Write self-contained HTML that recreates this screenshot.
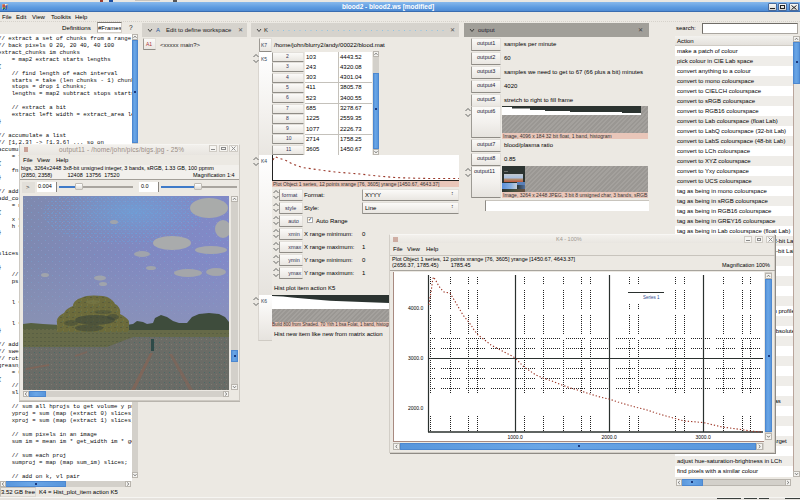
<!DOCTYPE html>
<html><head><meta charset="utf-8">
<style>
*{margin:0;padding:0;box-sizing:border-box}
html,body{width:800px;height:500px;overflow:hidden;background:#ece9e3;font-family:"Liberation Sans",sans-serif;font-size:6px;color:#222}
.a{position:absolute}
.tx{position:absolute;white-space:pre;line-height:1}
.btn{position:absolute;background:linear-gradient(#fbfaf8,#e9e6e1);border:1px solid #e2dfda;border-left-color:#9d9a94;border-bottom-color:#8f8c86;border-radius:1px}
.hatch{position:absolute;background:repeating-linear-gradient(135deg,#a4a19d 0 1.6px,#9a9793 1.6px 3.2px)}
.pink{position:absolute;background:#e9c6b9;color:#333;font-size:5px;white-space:pre;line-height:6px;overflow:hidden}
.code{position:absolute;font-family:"Liberation Mono",monospace;font-size:5.7px;line-height:6.95px;white-space:pre;color:#0a0a0a}
.sbv{position:absolute;background:#d3d0ca}
.thumbb{position:absolute;background:linear-gradient(90deg,#5896dc,#6aa6e6 40%,#5896dc);border:1px solid #4d88d0}
</style></head><body>

<!-- top panel strip -->
<div class="a" style="left:0;top:0;width:800px;height:2px;background:#e9e7e2"></div>
<div class="a" style="left:100px;top:0;width:3px;height:2px;background:#a04030"></div>
<div class="a" style="left:109px;top:0;width:4px;height:2px;background:#2050a0"></div>
<div class="a" style="left:135px;top:0;width:25px;height:1px;background:#c8c4bd"></div>
<div class="a" style="left:173px;top:0;width:4px;height:2px;background:#555"></div>
<!-- title bar -->
<div class="a" style="left:0;top:2px;width:800px;height:10px;background:linear-gradient(#86b8ec,#5d9be0 60%,#4f8bd4);border-bottom:1px solid #3a6db0"></div>
<svg class="a" style="left:2px;top:4px" width="6" height="6"><rect x="0" y="0" width="6" height="5" fill="#c8b8a0"/><rect x="0.5" y="0.5" width="3" height="3" fill="#c85040"/><rect x="3.5" y="1" width="2" height="4" fill="#3060c0"/><rect x="1" y="3.5" width="2" height="1.5" fill="#308040"/><rect x="3" y="0" width="1.5" height="1.5" fill="#f0f0e8"/><rect x="1" y="5" width="1" height="1" fill="#2050a0"/><rect x="3.5" y="5" width="1" height="1" fill="#2050a0"/></svg>
<div class="tx" style="left:342px;top:4px;font-size:6.5px;font-weight:bold;color:#fff">blood2 - blood2.ws [modified]</div>
<div class="a" style="left:768px;top:3px;width:9px;height:8px;background:linear-gradient(#f8f8f6,#d8d6d2);border:1px solid #4a6a9a;border-radius:1px"></div>
<div class="a" style="left:770px;top:8px;width:5px;height:1px;background:#222"></div>
<div class="a" style="left:778px;top:3px;width:9px;height:8px;background:linear-gradient(#f8f8f6,#d8d6d2);border:1px solid #4a6a9a;border-radius:1px"></div>
<div class="a" style="left:780px;top:5px;width:5px;height:4px;border:1px solid #222;border-top-width:1.5px"></div>
<div class="a" style="left:789px;top:3px;width:10px;height:8px;background:linear-gradient(#f8f8f6,#d8d6d2);border:1px solid #4a6a9a;border-radius:1px"></div>
<svg class="a" style="left:791px;top:4.5px" width="6" height="5"><path d="M0.5,0.5 L5.5,4.5 M5.5,0.5 L0.5,4.5" stroke="#222" stroke-width="1"/></svg>

<!-- menu -->
<div class="tx" style="left:2px;top:14px;font-size:6px;color:#000">File</div>
<div class="tx" style="left:16px;top:14px;font-size:6px;color:#000">Edit</div>
<div class="tx" style="left:32px;top:14px;font-size:6px;color:#000">View</div>
<div class="tx" style="left:51px;top:14px;font-size:6px;color:#000">Toolkits</div>
<div class="tx" style="left:75px;top:14px;font-size:6px;color:#000">Help</div>
<div class="a" style="left:0;top:21px;width:800px;height:1px;border-top:1px dotted #d6d2cb"></div>

<!-- toolbar -->
<div class="tx" style="left:62px;top:25px;font-size:6.2px;color:#000">Definitions</div>
<div class="a" style="left:97px;top:22px;width:25px;height:11px;background:#fff;border:1px solid #d2cdc6;border-top-color:#7a7670;border-left-color:#b0aca5"></div>
<div class="tx" style="left:98px;top:25px;font-size:6px;color:#000;width:23px;overflow:hidden">#Frames</div>
<div class="tx" style="left:129px;top:25px;font-size:6.5px">?</div>

<!-- code editor -->
<div class="a" style="left:0;top:34px;width:132px;height:447px;background:#fff;overflow:hidden">
<div class="code" style="left:-2px;top:1.8px">// extract a set of chunks from a range
// back pixels 0 20, 20 40, 40 100
extract_chunks im chunks
    = map2 extract starts lengths
{
    // find length of each interval
    starts = take (len chunks - 1) chunks
    stops = drop 1 chunks;
    lengths = map2 subtract stops starts

    // extract a bit
    extract left width = extract_area left 0 width
}

// accumulate a list
// [1,2,3] -&gt; [1,3,6] ... so on
accumulate l
    = foldl fn [] l
{
    fn a b = a ++ [b]
}

// add up columns
add_columns im
    = map (fn im) [0 .. im.bands - 1]
{
    x = im ? 0
    h = 0
}


slices = map extract_slice [0 .. n]

}
    // the number of slices
    ps = len slices


    l = 100


    l = fn
}

// add profile
// sweep each slice
// rotate each
greasn_slices
    = 0
{
    // sum
    sl = 0

    // sum all hprojs to get volume y proj
    yproj = sum (map (extract 0) slices)
    xproj = sum (map (extract 1) slices)

    // sum pixels in an image
    sum im = mean im * get_width im * get_height im

    // sum each proj
    sumproj = map (map sum_im) slices;

    // add on k, vl pair</div>
</div>
<!-- code v scrollbar -->
<div class="sbv" style="left:132px;top:34px;width:6px;height:444px"></div>
<div class="a" style="left:132px;top:34px;width:6px;height:6px;background:#f4f3f0;border:1px solid #b9b5ae"></div>
<div class="thumbb" style="left:132px;top:40px;width:6px;height:103px"></div>
<div class="a" style="left:132px;top:472px;width:6px;height:6px;background:#f4f3f0;border:1px solid #b9b5ae"></div>
<!-- code h scrollbar -->
<div class="sbv" style="left:0;top:481px;width:131px;height:6px"></div>
<div class="thumbb" style="left:5px;top:481px;width:61px;height:6px"></div>
<div class="a" style="left:125px;top:481px;width:6px;height:6px;background:#f4f3f0;border:1px solid #b9b5ae"></div>


<!-- ===== workspace tabs ===== -->
<div class="a" style="left:142px;top:23px;width:105px;height:14px;background:#d6d3cd"></div>
<svg class="a" style="left:147px;top:28px" width="6" height="5"><polyline points="1,1 3,3.5 5,1" fill="none" stroke="#333" stroke-width="0.9"/></svg>
<div class="tx" style="left:156px;top:27px;font-size:6px;color:#2a5aa0">A</div>
<div class="tx" style="left:166px;top:27px;font-size:6px">Edit to define workspace</div>
<div class="tx" style="left:238px;top:27px;font-size:6px;color:#555">&#10005;</div>

<div class="btn" style="left:143px;top:38px;width:13px;height:12px"></div>
<div class="tx" style="left:146px;top:42px;font-size:5px;color:#a33">A1</div>
<div class="tx" style="left:160px;top:42px;font-size:6px">&lt;xxxxx main?&gt;</div>

<div class="a" style="left:251px;top:23px;width:208px;height:14px;background:#d6d3cd"></div>
<svg class="a" style="left:256px;top:28px" width="6" height="5"><polyline points="1,1 3,3.5 5,1" fill="none" stroke="#333" stroke-width="0.9"/></svg>
<div class="tx" style="left:264px;top:27px;font-size:6px">K</div>
<svg class="a" style="left:272px;top:30px" width="175" height="2"><line x1="0" y1="0.5" x2="175" y2="0.5" stroke="#8ec4e4" stroke-width="1" stroke-dasharray="1 4.5"/></svg>
<div class="tx" style="left:450px;top:27px;font-size:6px;color:#555">&#10005;</div>

<div class="a" style="left:464px;top:23px;width:185px;height:14px;background:#a19f99"></div>
<svg class="a" style="left:469px;top:28px" width="6" height="5"><polyline points="1,1 3,3.5 5,1" fill="none" stroke="#333" stroke-width="0.9"/></svg>
<div class="tx" style="left:478px;top:27px;font-size:6px;color:#223">output</div>
<div class="tx" style="left:638px;top:27px;font-size:6px;color:#444">&#10005;</div>


<!-- ===== K column ===== -->
<div class="btn" style="left:259px;top:38px;width:13px;height:14px"></div>
<div class="tx" style="left:261px;top:43px;font-size:5px;color:#345">K7</div>
<div class="tx" style="left:274px;top:42px;font-size:6px;color:#000">/home/john/blurry2/andy/00022/blood.mat</div>
<div class="a" style="left:258px;top:52px;width:14px;height:103px;background:linear-gradient(#fff,#f3f1ee 60%,#e9e6e1);border-left:1px solid #d9d5cf"></div>
<div class="tx" style="left:261px;top:57px;font-size:5px;color:#345">K5</div>
<svg class="a" style="left:253px;top:53.0px" width="6" height="11"><polyline points="0.5,4 3,1.5 5.5,4" fill="none" stroke="#444" stroke-width="0.8"/><polyline points="0.5,7 3,9.5 5.5,7" fill="none" stroke="#444" stroke-width="0.8"/></svg>
<div class="a" style="left:305px;top:52px;width:67px;height:103px;background:#fff"></div>
<div class="a" style="left:338px;top:52px;width:1px;height:103px;background:#c4c1bb"></div>
<div class="a" style="left:305px;top:82px;width:67px;height:1px;background:#c4c1bb"></div>
<div class="a" style="left:305px;top:103px;width:67px;height:1px;background:#c4c1bb"></div>
<div class="a" style="left:305px;top:134px;width:67px;height:1px;background:#c4c1bb"></div>
<div class="sbv" style="left:373px;top:52px;width:6px;height:103px"></div>
<div class="a" style="left:373px;top:51px;width:6px;height:6px;background:#f4f3f0;border:1px solid #b9b5ae"></div>
<div class="thumbb" style="left:373px;top:73px;width:6px;height:76px"></div>
<div class="a" style="left:373px;top:149px;width:6px;height:6px;background:#f4f3f0;border:1px solid #b9b5ae"></div>

<div class="btn" style="left:272px;top:52.0px;width:32px;height:10px"></div>
<div class="tx" style="left:286px;top:54px;font-size:5px;color:#335">2</div>
<div class="tx" style="left:306px;top:53.5px;font-size:6px;color:#000">103</div>
<div class="tx" style="left:340px;top:53.5px;font-size:6px;color:#000">4443.52</div>
<div class="btn" style="left:272px;top:62.3px;width:32px;height:10px"></div>
<div class="tx" style="left:286px;top:64.3px;font-size:5px;color:#335">3</div>
<div class="tx" style="left:306px;top:63.8px;font-size:6px;color:#000">243</div>
<div class="tx" style="left:340px;top:63.8px;font-size:6px;color:#000">4320.08</div>
<div class="btn" style="left:272px;top:72.6px;width:32px;height:10px"></div>
<div class="tx" style="left:286px;top:74.6px;font-size:5px;color:#335">4</div>
<div class="tx" style="left:306px;top:74.1px;font-size:6px;color:#000">303</div>
<div class="tx" style="left:340px;top:74.1px;font-size:6px;color:#000">4301.04</div>
<div class="btn" style="left:272px;top:82.9px;width:32px;height:10px"></div>
<div class="tx" style="left:286px;top:84.9px;font-size:5px;color:#335">5</div>
<div class="tx" style="left:306px;top:84.4px;font-size:6px;color:#000">411</div>
<div class="tx" style="left:340px;top:84.4px;font-size:6px;color:#000">3805.78</div>
<div class="btn" style="left:272px;top:93.2px;width:32px;height:10px"></div>
<div class="tx" style="left:286px;top:95.2px;font-size:5px;color:#335">6</div>
<div class="tx" style="left:306px;top:94.7px;font-size:6px;color:#000">523</div>
<div class="tx" style="left:340px;top:94.7px;font-size:6px;color:#000">3400.55</div>
<div class="btn" style="left:272px;top:103.5px;width:32px;height:10px"></div>
<div class="tx" style="left:286px;top:105.5px;font-size:5px;color:#335">7</div>
<div class="tx" style="left:306px;top:105px;font-size:6px;color:#000">685</div>
<div class="tx" style="left:340px;top:105px;font-size:6px;color:#000">3278.67</div>
<div class="btn" style="left:272px;top:113.8px;width:32px;height:10px"></div>
<div class="tx" style="left:286px;top:115.8px;font-size:5px;color:#335">8</div>
<div class="tx" style="left:306px;top:115.3px;font-size:6px;color:#000">1225</div>
<div class="tx" style="left:340px;top:115.3px;font-size:6px;color:#000">2559.35</div>
<div class="btn" style="left:272px;top:124.1px;width:32px;height:10px"></div>
<div class="tx" style="left:286px;top:126.1px;font-size:5px;color:#335">9</div>
<div class="tx" style="left:306px;top:125.6px;font-size:6px;color:#000">1077</div>
<div class="tx" style="left:340px;top:125.6px;font-size:6px;color:#000">2226.73</div>
<div class="btn" style="left:272px;top:134.4px;width:32px;height:10px"></div>
<div class="tx" style="left:286px;top:136.4px;font-size:5px;color:#335">10</div>
<div class="tx" style="left:306px;top:135.9px;font-size:6px;color:#000">2714</div>
<div class="tx" style="left:340px;top:135.9px;font-size:6px;color:#000">1758.25</div>
<div class="btn" style="left:272px;top:144.7px;width:32px;height:10px"></div>
<div class="tx" style="left:286px;top:146.7px;font-size:5px;color:#335">11</div>
<div class="tx" style="left:306px;top:146.2px;font-size:6px;color:#000">3605</div>
<div class="tx" style="left:340px;top:146.2px;font-size:6px;color:#000">1450.67</div>

<!-- K4 plot row -->
<div class="a" style="left:258px;top:155px;width:14px;height:140px;background:linear-gradient(#fff,#f3f1ee 50%,#e6e3de);border-left:1px solid #d9d5cf"></div>
<div class="tx" style="left:261px;top:159px;font-size:5px;color:#345">K4</div>
<svg class="a" style="left:253px;top:156.0px" width="6" height="11"><polyline points="0.5,4 3,1.5 5.5,4" fill="none" stroke="#444" stroke-width="0.8"/><polyline points="0.5,7 3,9.5 5.5,7" fill="none" stroke="#444" stroke-width="0.8"/></svg>
<div class="a" style="left:272px;top:155px;width:187px;height:26px;background:#fff;border-left:1px solid #222;border-bottom:1px solid #222"></div>
<svg class="a" style="left:272px;top:155px" width="187" height="26"><polyline points="1,5 3,1.5 6,3 13,5 20.5,9 30.5,12.5 48,15 63,17 88,19 105.5,21 123,22.5 135,23 158,23.5 187,23.5" fill="none" stroke="#9b3a2c" stroke-width="1.1" stroke-dasharray="2,3"/></svg>
<div class="pink" style="left:272px;top:181px;width:187px;height:6px;padding-left:1px">Plot Object 1 series, 12 points xrange [76, 3605] yrange [1450.67, 4643.37]</div>

<svg class="a" style="left:273px;top:189.0px" width="6" height="11"><polyline points="0.5,4 3,1.5 5.5,4" fill="none" stroke="#444" stroke-width="0.8"/><polyline points="0.5,7 3,9.5 5.5,7" fill="none" stroke="#444" stroke-width="0.8"/></svg>
<div class="btn" style="left:279px;top:189px;width:24px;height:12px"></div>
<div class="tx" style="left:281.8px;top:192.5px;font-size:5.5px;color:#335">format</div>
<div class="tx" style="left:304px;top:192px;font-size:6px;color:#000">Format:</div>
<svg class="a" style="left:273px;top:202.0px" width="6" height="11"><polyline points="0.5,4 3,1.5 5.5,4" fill="none" stroke="#444" stroke-width="0.8"/><polyline points="0.5,7 3,9.5 5.5,7" fill="none" stroke="#444" stroke-width="0.8"/></svg>
<div class="btn" style="left:279px;top:202px;width:24px;height:12px"></div>
<div class="tx" style="left:285.0px;top:205.5px;font-size:5.5px;color:#335">style</div>
<div class="tx" style="left:304px;top:205px;font-size:6px;color:#000">Style:</div>
<svg class="a" style="left:273px;top:215.0px" width="6" height="11"><polyline points="0.5,4 3,1.5 5.5,4" fill="none" stroke="#444" stroke-width="0.8"/><polyline points="0.5,7 3,9.5 5.5,7" fill="none" stroke="#444" stroke-width="0.8"/></svg>
<div class="btn" style="left:279px;top:215px;width:24px;height:12px"></div>
<div class="tx" style="left:288.2px;top:218.5px;font-size:5.5px;color:#335">auto</div>
<svg class="a" style="left:273px;top:228.0px" width="6" height="11"><polyline points="0.5,4 3,1.5 5.5,4" fill="none" stroke="#444" stroke-width="0.8"/><polyline points="0.5,7 3,9.5 5.5,7" fill="none" stroke="#444" stroke-width="0.8"/></svg>
<div class="btn" style="left:279px;top:228px;width:24px;height:12px"></div>
<div class="tx" style="left:288.2px;top:231.5px;font-size:5.5px;color:#335">xmin</div>
<div class="tx" style="left:304px;top:231px;font-size:6px;color:#000">X range minimum:</div>
<div class="tx" style="left:362px;top:231px;font-size:6px;color:#000">0</div>
<svg class="a" style="left:273px;top:241.0px" width="6" height="11"><polyline points="0.5,4 3,1.5 5.5,4" fill="none" stroke="#444" stroke-width="0.8"/><polyline points="0.5,7 3,9.5 5.5,7" fill="none" stroke="#444" stroke-width="0.8"/></svg>
<div class="btn" style="left:279px;top:241px;width:24px;height:12px"></div>
<div class="tx" style="left:288.2px;top:244.5px;font-size:5.5px;color:#335">xmax</div>
<div class="tx" style="left:304px;top:244px;font-size:6px;color:#000">X range maximum:</div>
<div class="tx" style="left:362px;top:244px;font-size:6px;color:#000">1</div>
<svg class="a" style="left:273px;top:254.0px" width="6" height="11"><polyline points="0.5,4 3,1.5 5.5,4" fill="none" stroke="#444" stroke-width="0.8"/><polyline points="0.5,7 3,9.5 5.5,7" fill="none" stroke="#444" stroke-width="0.8"/></svg>
<div class="btn" style="left:279px;top:254px;width:24px;height:12px"></div>
<div class="tx" style="left:288.2px;top:257.5px;font-size:5.5px;color:#335">ymin</div>
<div class="tx" style="left:304px;top:257px;font-size:6px;color:#000">Y range minimum:</div>
<div class="tx" style="left:362px;top:257px;font-size:6px;color:#000">0</div>
<svg class="a" style="left:273px;top:267.0px" width="6" height="11"><polyline points="0.5,4 3,1.5 5.5,4" fill="none" stroke="#444" stroke-width="0.8"/><polyline points="0.5,7 3,9.5 5.5,7" fill="none" stroke="#444" stroke-width="0.8"/></svg>
<div class="btn" style="left:279px;top:267px;width:24px;height:12px"></div>
<div class="tx" style="left:288.2px;top:270.5px;font-size:5.5px;color:#335">ymax</div>
<div class="tx" style="left:304px;top:270px;font-size:6px;color:#000">Y range maximum:</div>
<div class="tx" style="left:362px;top:270px;font-size:6px;color:#000">1</div>

<div class="btn" style="left:362px;top:189px;width:97px;height:12px"></div>
<div class="tx" style="left:365px;top:192px;font-size:6px;color:#000">XYYY</div>
<div class="tx" style="left:451px;top:191px;font-size:5px;color:#333">&#8597;</div>
<div class="btn" style="left:362px;top:202px;width:97px;height:12px"></div>
<div class="tx" style="left:365px;top:205px;font-size:6px;color:#000">Line</div>
<div class="tx" style="left:451px;top:204px;font-size:5px;color:#333">&#8597;</div>
<div class="a" style="left:307px;top:217px;width:6px;height:6px;background:#fff;border:1px solid #aaa"></div>
<div class="tx" style="left:308px;top:217px;font-size:5px;color:#000">&#10003;</div>
<div class="tx" style="left:316px;top:218px;font-size:6px;color:#000">Auto Range</div>
<div class="tx" style="left:274px;top:285px;font-size:6px;color:#000">Hist plot item action K5</div>

<!-- K6 row -->
<div class="a" style="left:258px;top:295px;width:14px;height:46px;background:linear-gradient(#fff,#f3f1ee 50%,#e6e3de);border-left:1px solid #d9d5cf;border-bottom:1px solid #cfcbc4"></div>
<div class="tx" style="left:261px;top:299px;font-size:5px;color:#345">K6</div>
<svg class="a" style="left:253px;top:296.0px" width="6" height="11"><polyline points="0.5,4 3,1.5 5.5,4" fill="none" stroke="#444" stroke-width="0.8"/><polyline points="0.5,7 3,9.5 5.5,7" fill="none" stroke="#444" stroke-width="0.8"/></svg>
<div class="a" style="left:272px;top:295px;width:187px;height:14px;background:#fff"></div>
<svg class="a" style="left:272px;top:295px" width="187" height="14"><polygon points="0,0 187,0 187,8 117,8 90,7 58,5.8 40,4.2 20,2.5 11,1.6 0,1" fill="#2b3330"/></svg>
<div class="hatch" style="left:272px;top:309px;width:187px;height:13px"></div>
<div class="pink" style="left:272px;top:322px;width:187px;height:5px;font-size:4.5px;line-height:5px">Build 800 from Shaded. 70 Yith 1 bsa Folat, 1 band, histogram</div>
<div class="tx" style="left:274px;top:331px;font-size:6px;color:#000">Hist new item like new from matrix action</div>


<!-- ===== output column ===== -->
<div class="btn" style="left:471px;top:38px;width:30px;height:13px"></div>
<div class="tx" style="left:477px;top:41px;font-size:5.5px;color:#223">output1</div>
<div class="tx" style="left:504px;top:41px;font-size:6px;color:#000">samples per minute</div>
<div class="btn" style="left:471px;top:52px;width:30px;height:13px"></div>
<div class="tx" style="left:477px;top:55px;font-size:5.5px;color:#223">output2</div>
<div class="tx" style="left:504px;top:55px;font-size:6px;color:#000">60</div>
<div class="btn" style="left:471px;top:66px;width:30px;height:13px"></div>
<div class="tx" style="left:477px;top:69px;font-size:5.5px;color:#223">output3</div>
<div class="tx" style="left:504px;top:69px;font-size:6px;color:#000">samples we need to get to 67 (66 plus a bit) minutes</div>
<div class="btn" style="left:471px;top:80px;width:30px;height:13px"></div>
<div class="tx" style="left:477px;top:83px;font-size:5.5px;color:#223">output4</div>
<div class="tx" style="left:504px;top:83px;font-size:6px;color:#000">4020</div>
<div class="btn" style="left:471px;top:94px;width:30px;height:13px"></div>
<div class="tx" style="left:477px;top:97px;font-size:5.5px;color:#223">output5</div>
<div class="tx" style="left:504px;top:97px;font-size:6px;color:#000">stretch to right to fill frame</div>
<svg class="a" style="left:465px;top:107px" width="6" height="11"><polyline points="0.5,4 3,1.5 5.5,4" fill="none" stroke="#444" stroke-width="0.8"/><polyline points="0.5,7 3,9.5 5.5,7" fill="none" stroke="#444" stroke-width="0.8"/></svg>
<div class="btn" style="left:471px;top:106px;width:30px;height:32px;background:linear-gradient(#fbfaf8,#f3f1ee 50%,#e6e3de)"></div>
<div class="tx" style="left:477px;top:109px;font-size:5.5px;color:#223">output6</div>
<div class="a" style="left:502px;top:106px;width:139px;height:9px;background:#fff"></div>
<svg class="a" style="left:502px;top:106px" width="139" height="9"><polygon points="0,0 139,0 139,7 120,7 120,6 68,6 68,5 43,5 43,4 28,4 28,2.5 10,2.5 10,1 0,1" fill="#2b3330"/></svg>
<div class="hatch" style="left:641px;top:106px;width:7px;height:9px"></div>
<div class="hatch" style="left:502px;top:115px;width:146px;height:18px"></div>
<div class="pink" style="left:502px;top:133px;width:146px;height:6px;font-size:5px;padding-left:1px">Image, 4096 x 184 32 bit float, 1 band, histogram</div>
<div class="btn" style="left:471px;top:139px;width:30px;height:13px"></div>
<div class="tx" style="left:477px;top:142px;font-size:5.5px;color:#223">output7</div>
<div class="tx" style="left:504px;top:142px;font-size:6px;color:#000">blood/plasma ratio</div>
<div class="btn" style="left:471px;top:153px;width:30px;height:13px"></div>
<div class="tx" style="left:477px;top:156px;font-size:5.5px;color:#223">output8</div>
<div class="tx" style="left:504px;top:156px;font-size:6px;color:#000">0.85</div>
<svg class="a" style="left:465px;top:167px" width="6" height="11"><polyline points="0.5,4 3,1.5 5.5,4" fill="none" stroke="#444" stroke-width="0.8"/><polyline points="0.5,7 3,9.5 5.5,7" fill="none" stroke="#444" stroke-width="0.8"/></svg>
<div class="btn" style="left:471px;top:166px;width:30px;height:32px;background:linear-gradient(#fbfaf8,#f3f1ee 50%,#e6e3de)"></div>
<div class="tx" style="left:474px;top:169px;font-size:5.5px;color:#223">output11</div>
<div class="a" style="left:502px;top:166px;width:23px;height:26px;background:#2c3431;overflow:hidden">
<div class="a" style="left:2px;top:5px;width:4px;height:1px;background:#6a6e6a"></div>
<div class="a" style="left:2px;top:8px;width:19px;height:8px;background:linear-gradient(#c4c8cc,#a8c0e0 45%,#b08868 70%,#c05a40)"></div>
<div class="a" style="left:0;top:17px;width:15px;height:6px;background:linear-gradient(90deg,#5a8ed8,#88b0e0 60%,#c8d0d8)"></div>
<div class="a" style="left:15px;top:16px;width:8px;height:3px;background:#5a80b8"></div>
<div class="a" style="left:15px;top:19px;width:8px;height:4px;background:linear-gradient(90deg,#2c3431,#5070a0)"></div>
<div class="a" style="left:0;top:23px;width:23px;height:3px;background:linear-gradient(90deg,#2c3431,#445040 50%,#6a5040)"></div>
</div>
<div class="hatch" style="left:525px;top:166px;width:123px;height:26px"></div>
<div class="pink" style="left:502px;top:192px;width:146px;height:6px;font-size:5px;padding-left:1px">Image, 3264 x 2448 JPEG, 3 bit 8 unsigned char, 3 bands, sRGB</div>
<div class="a" style="left:485px;top:200px;width:164px;height:11px;background:#fff;border-left:1px solid #8e8b85;border-top:1px solid #c8c4bd"></div>

<!-- ===== right panel ===== -->
<div class="tx" style="left:676px;top:25px;font-size:6px;color:#000">search:</div>
<div class="a" style="left:702px;top:23px;width:96px;height:11px;background:#fff;border:1px solid #aaa6a0;border-left-color:#6f6c67;border-top-color:#6f6c67"></div>
<div class="a" style="left:675px;top:36px;width:118px;height:441px;background:#fff;overflow:hidden">
<div class="a" style="left:0;top:0;width:118px;height:10px;background:linear-gradient(#f3f2ef,#e4e1dc);border-bottom:1px solid #d0ccc5"></div>
<div class="tx" style="left:2px;top:2px;font-size:6px;color:#000">Action</div>
<div class="a" style="left:0;top:10px;width:118px;height:10px;background:#fff"></div>
<div class="tx" style="left:2px;top:12px;font-size:6px;color:#000">make a patch of colour</div>
<div class="a" style="left:0;top:20px;width:118px;height:10px;background:#efede9"></div>
<div class="tx" style="left:2px;top:22px;font-size:6px;color:#000">pick colour in CIE Lab space</div>
<div class="a" style="left:0;top:30px;width:118px;height:10px;background:#fff"></div>
<div class="tx" style="left:2px;top:32px;font-size:6px;color:#000">convert anything to a colour</div>
<div class="a" style="left:0;top:40px;width:118px;height:10px;background:#efede9"></div>
<div class="tx" style="left:2px;top:42px;font-size:6px;color:#000">convert to mono colourspace</div>
<div class="a" style="left:0;top:50px;width:118px;height:10px;background:#fff"></div>
<div class="tx" style="left:2px;top:52px;font-size:6px;color:#000">convert to CIELCH colourspace</div>
<div class="a" style="left:0;top:60px;width:118px;height:10px;background:#efede9"></div>
<div class="tx" style="left:2px;top:62px;font-size:6px;color:#000">convert to sRGB colourspace</div>
<div class="a" style="left:0;top:70px;width:118px;height:10px;background:#fff"></div>
<div class="tx" style="left:2px;top:72px;font-size:6px;color:#000">convert to RGB16 colourspace</div>
<div class="a" style="left:0;top:80px;width:118px;height:10px;background:#efede9"></div>
<div class="tx" style="left:2px;top:82px;font-size:6px;color:#000">convert to Lab colourspace (float Lab)</div>
<div class="a" style="left:0;top:90px;width:118px;height:10px;background:#fff"></div>
<div class="tx" style="left:2px;top:92px;font-size:6px;color:#000">convert to LabQ colourspace (32-bit Lab)</div>
<div class="a" style="left:0;top:100px;width:118px;height:10px;background:#efede9"></div>
<div class="tx" style="left:2px;top:102px;font-size:6px;color:#000">convert to LabS colourspace (48-bit Lab)</div>
<div class="a" style="left:0;top:110px;width:118px;height:10px;background:#fff"></div>
<div class="tx" style="left:2px;top:112px;font-size:6px;color:#000">convert to LCh colourspace</div>
<div class="a" style="left:0;top:120px;width:118px;height:10px;background:#efede9"></div>
<div class="tx" style="left:2px;top:122px;font-size:6px;color:#000">convert to XYZ colourspace</div>
<div class="a" style="left:0;top:130px;width:118px;height:10px;background:#fff"></div>
<div class="tx" style="left:2px;top:132px;font-size:6px;color:#000">convert to Yxy colourspace</div>
<div class="a" style="left:0;top:140px;width:118px;height:10px;background:#efede9"></div>
<div class="tx" style="left:2px;top:142px;font-size:6px;color:#000">convert to UCS colourspace</div>
<div class="a" style="left:0;top:150px;width:118px;height:10px;background:#fff"></div>
<div class="tx" style="left:2px;top:152px;font-size:6px;color:#000">tag as being in mono colourspace</div>
<div class="a" style="left:0;top:160px;width:118px;height:10px;background:#efede9"></div>
<div class="tx" style="left:2px;top:162px;font-size:6px;color:#000">tag as being in sRGB colourspace</div>
<div class="a" style="left:0;top:170px;width:118px;height:10px;background:#fff"></div>
<div class="tx" style="left:2px;top:172px;font-size:6px;color:#000">tag as being in RGB16 colourspace</div>
<div class="a" style="left:0;top:180px;width:118px;height:10px;background:#efede9"></div>
<div class="tx" style="left:2px;top:182px;font-size:6px;color:#000">tag as being in GREY16 colourspace</div>
<div class="a" style="left:0;top:190px;width:118px;height:10px;background:#fff"></div>
<div class="tx" style="left:2px;top:192px;font-size:6px;color:#000">tag as being in Lab colourspace (float Lab)</div>
<div class="a" style="left:0;top:200px;width:118px;height:10px;background:#efede9"></div>
<div class="tx" style="left:2px;top:202px;font-size:6px;color:#000">tag as being in LabQ colourspace (32-bit Lab)</div>
<div class="a" style="left:0;top:210px;width:118px;height:10px;background:#fff"></div>
<div class="tx" style="left:2px;top:212px;font-size:6px;color:#000">tag as being in LabS colourspace (48-bit Lab)</div>
<div class="a" style="left:0;top:220px;width:118px;height:10px;background:#efede9"></div>
<div class="tx" style="left:2px;top:222px;font-size:6px;color:#000">tag as being in LCh colourspace</div>
<div class="a" style="left:0;top:230px;width:118px;height:10px;background:#fff"></div>
<div class="tx" style="left:2px;top:232px;font-size:6px;color:#000">tag as being in XYZ colourspace</div>
<div class="a" style="left:0;top:240px;width:118px;height:10px;background:#efede9"></div>
<div class="tx" style="left:2px;top:242px;font-size:6px;color:#000">tag as being in Yxy colourspace</div>
<div class="a" style="left:0;top:250px;width:118px;height:10px;background:#fff"></div>
<div class="tx" style="left:2px;top:252px;font-size:6px;color:#000">tag as being in UCS colourspace</div>
<div class="a" style="left:0;top:260px;width:118px;height:10px;background:#efede9"></div>
<div class="tx" style="left:2px;top:262px;font-size:6px;color:#000">adjust colour balance</div>
<div class="a" style="left:0;top:270px;width:118px;height:10px;background:#fff"></div>
<div class="tx" style="left:2px;top:272px;font-size:6px;color:#000">apply colourspace transform between profiles</div>
<div class="a" style="left:0;top:280px;width:118px;height:10px;background:#efede9"></div>
<div class="tx" style="left:2px;top:282px;font-size:6px;color:#000">transform colourspace</div>
<div class="a" style="left:0;top:290px;width:118px;height:10px;background:#fff"></div>
<div class="tx" style="left:2px;top:292px;font-size:6px;color:#000">transform between two ICC profiles absolute</div>
<div class="a" style="left:0;top:300px;width:118px;height:10px;background:#efede9"></div>
<div class="tx" style="left:2px;top:302px;font-size:6px;color:#000">import ICC profile</div>
<div class="a" style="left:0;top:310px;width:118px;height:10px;background:#fff"></div>
<div class="tx" style="left:2px;top:312px;font-size:6px;color:#000">export ICC profile</div>
<div class="a" style="left:0;top:320px;width:118px;height:10px;background:#efede9"></div>
<div class="tx" style="left:2px;top:322px;font-size:6px;color:#000">remove ICC profile</div>
<div class="a" style="left:0;top:330px;width:118px;height:10px;background:#fff"></div>
<div class="tx" style="left:2px;top:332px;font-size:6px;color:#000">adjust colour temperature</div>
<div class="a" style="left:0;top:340px;width:118px;height:10px;background:#efede9"></div>
<div class="tx" style="left:2px;top:342px;font-size:6px;color:#000">sample colour</div>
<div class="a" style="left:0;top:350px;width:118px;height:10px;background:#fff"></div>
<div class="tx" style="left:2px;top:352px;font-size:6px;color:#000">measure colour chart</div>
<div class="a" style="left:0;top:360px;width:118px;height:10px;background:#efede9"></div>
<div class="tx" style="left:2px;top:362px;font-size:6px;color:#000">make a colour chart from a set of ideas</div>
<div class="a" style="left:0;top:370px;width:118px;height:10px;background:#fff"></div>
<div class="tx" style="left:2px;top:372px;font-size:6px;color:#000">adjust colour saturation</div>
<div class="a" style="left:0;top:380px;width:118px;height:10px;background:#efede9"></div>
<div class="tx" style="left:2px;top:382px;font-size:6px;color:#000">adjust colour hue</div>
<div class="a" style="left:0;top:390px;width:118px;height:10px;background:#fff"></div>
<div class="tx" style="left:2px;top:392px;font-size:6px;color:#000">adjust brightness</div>
<div class="a" style="left:0;top:400px;width:118px;height:10px;background:#efede9"></div>
<div class="tx" style="left:2px;top:402px;font-size:6px;color:#000">colour-correct an image to match a target</div>
<div class="a" style="left:0;top:410px;width:118px;height:10px;background:#fff"></div>
<div class="tx" style="left:2px;top:412px;font-size:6px;color:#000">make false colour image</div>
<div class="a" style="left:0;top:420px;width:118px;height:10px;background:#efede9"></div>
<div class="tx" style="left:2px;top:422px;font-size:6px;color:#000">adjust hue-saturation-brightness in LCh</div>
<div class="a" style="left:0;top:430px;width:118px;height:10px;background:#fff"></div>
<div class="tx" style="left:2px;top:432px;font-size:6px;color:#000">find pixels with a similar colour</div>
</div>
<div class="a" style="left:793px;top:36px;width:7px;height:441px;background:#e9e6e0;border-left:1px solid #b9a59c"></div>
<div class="a" style="left:793px;top:36px;width:7px;height:6px;background:#f4f3f0;border:1px solid #b9b5ae"></div>
<div class="thumbb" style="left:793px;top:42px;width:7px;height:42px"></div>
<div class="a" style="left:793px;top:471px;width:7px;height:6px;background:#f4f3f0;border:1px solid #b9b5ae"></div>
<div class="sbv" style="left:676px;top:479px;width:115px;height:7px;border:1px solid #b9b5ae"></div>
<div class="thumbb" style="left:681px;top:479px;width:22px;height:7px"></div>
<!-- ===== graph window ===== -->
<div class="a" style="left:389px;top:234px;width:386px;height:219px;background:#ece9e3;border:1px solid #d2cec7;border-top-color:#f8f7f4;box-shadow:1px 1px 0 #8f8b85"></div>
<div class="a" style="left:390px;top:235px;width:384px;height:8px;background:linear-gradient(#f3f1ed,#e9e6e1)"></div>
<div class="a" style="left:393px;top:237px;width:5px;height:5px;background:#b07060;opacity:.5"></div>
<div class="tx" style="left:556px;top:237px;font-size:5.5px;color:#a09890">K4 - 100%</div>
<div class="a" style="left:744px;top:236px;width:8px;height:7px;background:#f6f5f2;border:1px solid #d0ccc5"></div>
<div class="a" style="left:755px;top:236px;width:8px;height:7px;background:#f6f5f2;border:1px solid #d0ccc5"></div>
<div class="a" style="left:766px;top:236px;width:8px;height:7px;background:#f6f5f2;border:1px solid #d0ccc5"></div>
<div class="a" style="left:746px;top:240px;width:4px;height:1px;background:#888"></div>
<div class="a" style="left:757px;top:238px;width:4px;height:3px;border:1px solid #888"></div>
<svg class="a" style="left:768px;top:237px" width="5" height="5"><path d="M0.5,0.5 L4.5,4.5 M4.5,0.5 L0.5,4.5" stroke="#888" stroke-width="0.9"/></svg>
<div class="tx" style="left:393px;top:246px;font-size:6px;color:#000">File</div>
<div class="tx" style="left:407px;top:246px;font-size:6px;color:#000">View</div>
<div class="tx" style="left:426px;top:246px;font-size:6px;color:#000">Help</div>
<div class="a" style="left:390px;top:255px;width:385px;height:1px;background:#c8c4bd"></div>
<div class="tx" style="left:392px;top:257px;font-size:5.5px;color:#000">Plot Object 1 series, 12 points xrange [76, 3605] yrange [1450.67, 4643.37]</div>
<div class="tx" style="left:392px;top:263px;font-size:5.5px;color:#000">(2656.37, 1785.45)        1785.45</div>
<div class="tx" style="left:722px;top:263px;font-size:5.5px;color:#000">Magnification 100%</div>
<div class="a" style="left:390px;top:270px;width:385px;height:1px;background:#a8a49d"></div>
<div class="a" style="left:393px;top:272px;width:371px;height:170px;background:#fff;border-left:1px solid #a88a80;border-bottom:1px solid #a88a80"></div>
<svg class="a" style="left:394px;top:272px" width="370" height="169" viewBox="394 272 370 169">
<line x1="430.5" y1="277" x2="430.5" y2="285" stroke="#222" stroke-width="1" stroke-dasharray="1 1"/>
<line x1="430.5" y1="290" x2="430.5" y2="310" stroke="#222" stroke-width="1" stroke-dasharray="1 1"/>
<line x1="430.5" y1="315" x2="430.5" y2="335" stroke="#222" stroke-width="1" stroke-dasharray="1 1"/>
<line x1="430.5" y1="340" x2="430.5" y2="393" stroke="#222" stroke-width="1" stroke-dasharray="1 1"/>
<line x1="430.5" y1="416" x2="430.5" y2="432" stroke="#222" stroke-width="1" stroke-dasharray="1 1"/>
<line x1="450.5" y1="277" x2="450.5" y2="285" stroke="#222" stroke-width="1" stroke-dasharray="1 1"/>
<line x1="450.5" y1="290" x2="450.5" y2="310" stroke="#222" stroke-width="1" stroke-dasharray="1 1"/>
<line x1="450.5" y1="315" x2="450.5" y2="335" stroke="#222" stroke-width="1" stroke-dasharray="1 1"/>
<line x1="450.5" y1="340" x2="450.5" y2="393" stroke="#222" stroke-width="1" stroke-dasharray="1 1"/>
<line x1="450.5" y1="416" x2="450.5" y2="432" stroke="#222" stroke-width="1" stroke-dasharray="1 1"/>
<line x1="468.5" y1="277" x2="468.5" y2="285" stroke="#222" stroke-width="1" stroke-dasharray="1 1"/>
<line x1="468.5" y1="290" x2="468.5" y2="310" stroke="#222" stroke-width="1" stroke-dasharray="1 1"/>
<line x1="468.5" y1="315" x2="468.5" y2="335" stroke="#222" stroke-width="1" stroke-dasharray="1 1"/>
<line x1="468.5" y1="340" x2="468.5" y2="393" stroke="#222" stroke-width="1" stroke-dasharray="1 1"/>
<line x1="468.5" y1="416" x2="468.5" y2="432" stroke="#222" stroke-width="1" stroke-dasharray="1 1"/>
<line x1="477.5" y1="277" x2="477.5" y2="285" stroke="#222" stroke-width="1" stroke-dasharray="1 1"/>
<line x1="477.5" y1="290" x2="477.5" y2="310" stroke="#222" stroke-width="1" stroke-dasharray="1 1"/>
<line x1="477.5" y1="315" x2="477.5" y2="335" stroke="#222" stroke-width="1" stroke-dasharray="1 1"/>
<line x1="477.5" y1="340" x2="477.5" y2="393" stroke="#222" stroke-width="1" stroke-dasharray="1 1"/>
<line x1="477.5" y1="416" x2="477.5" y2="432" stroke="#222" stroke-width="1" stroke-dasharray="1 1"/>
<line x1="524.5" y1="277" x2="524.5" y2="285" stroke="#222" stroke-width="1" stroke-dasharray="1 1"/>
<line x1="524.5" y1="290" x2="524.5" y2="310" stroke="#222" stroke-width="1" stroke-dasharray="1 1"/>
<line x1="524.5" y1="315" x2="524.5" y2="335" stroke="#222" stroke-width="1" stroke-dasharray="1 1"/>
<line x1="524.5" y1="340" x2="524.5" y2="393" stroke="#222" stroke-width="1" stroke-dasharray="1 1"/>
<line x1="524.5" y1="416" x2="524.5" y2="432" stroke="#222" stroke-width="1" stroke-dasharray="1 1"/>
<line x1="543.5" y1="277" x2="543.5" y2="285" stroke="#222" stroke-width="1" stroke-dasharray="1 1"/>
<line x1="543.5" y1="290" x2="543.5" y2="310" stroke="#222" stroke-width="1" stroke-dasharray="1 1"/>
<line x1="543.5" y1="315" x2="543.5" y2="335" stroke="#222" stroke-width="1" stroke-dasharray="1 1"/>
<line x1="543.5" y1="340" x2="543.5" y2="393" stroke="#222" stroke-width="1" stroke-dasharray="1 1"/>
<line x1="543.5" y1="416" x2="543.5" y2="432" stroke="#222" stroke-width="1" stroke-dasharray="1 1"/>
<line x1="563.5" y1="277" x2="563.5" y2="285" stroke="#222" stroke-width="1" stroke-dasharray="1 1"/>
<line x1="563.5" y1="290" x2="563.5" y2="310" stroke="#222" stroke-width="1" stroke-dasharray="1 1"/>
<line x1="563.5" y1="315" x2="563.5" y2="335" stroke="#222" stroke-width="1" stroke-dasharray="1 1"/>
<line x1="563.5" y1="340" x2="563.5" y2="393" stroke="#222" stroke-width="1" stroke-dasharray="1 1"/>
<line x1="563.5" y1="416" x2="563.5" y2="432" stroke="#222" stroke-width="1" stroke-dasharray="1 1"/>
<line x1="581.5" y1="277" x2="581.5" y2="285" stroke="#222" stroke-width="1" stroke-dasharray="1 1"/>
<line x1="581.5" y1="290" x2="581.5" y2="310" stroke="#222" stroke-width="1" stroke-dasharray="1 1"/>
<line x1="581.5" y1="315" x2="581.5" y2="335" stroke="#222" stroke-width="1" stroke-dasharray="1 1"/>
<line x1="581.5" y1="340" x2="581.5" y2="393" stroke="#222" stroke-width="1" stroke-dasharray="1 1"/>
<line x1="581.5" y1="416" x2="581.5" y2="432" stroke="#222" stroke-width="1" stroke-dasharray="1 1"/>
<line x1="590.5" y1="277" x2="590.5" y2="285" stroke="#222" stroke-width="1" stroke-dasharray="1 1"/>
<line x1="590.5" y1="290" x2="590.5" y2="310" stroke="#222" stroke-width="1" stroke-dasharray="1 1"/>
<line x1="590.5" y1="315" x2="590.5" y2="335" stroke="#222" stroke-width="1" stroke-dasharray="1 1"/>
<line x1="590.5" y1="340" x2="590.5" y2="393" stroke="#222" stroke-width="1" stroke-dasharray="1 1"/>
<line x1="590.5" y1="416" x2="590.5" y2="432" stroke="#222" stroke-width="1" stroke-dasharray="1 1"/>
<line x1="629.5" y1="277" x2="629.5" y2="285" stroke="#222" stroke-width="1" stroke-dasharray="1 1"/>
<line x1="629.5" y1="304" x2="629.5" y2="310" stroke="#222" stroke-width="1" stroke-dasharray="1 1"/>
<line x1="629.5" y1="315" x2="629.5" y2="335" stroke="#222" stroke-width="1" stroke-dasharray="1 1"/>
<line x1="629.5" y1="340" x2="629.5" y2="393" stroke="#222" stroke-width="1" stroke-dasharray="1 1"/>
<line x1="629.5" y1="416" x2="629.5" y2="432" stroke="#222" stroke-width="1" stroke-dasharray="1 1"/>
<line x1="638.5" y1="277" x2="638.5" y2="285" stroke="#222" stroke-width="1" stroke-dasharray="1 1"/>
<line x1="638.5" y1="304" x2="638.5" y2="310" stroke="#222" stroke-width="1" stroke-dasharray="1 1"/>
<line x1="638.5" y1="315" x2="638.5" y2="335" stroke="#222" stroke-width="1" stroke-dasharray="1 1"/>
<line x1="638.5" y1="340" x2="638.5" y2="393" stroke="#222" stroke-width="1" stroke-dasharray="1 1"/>
<line x1="638.5" y1="416" x2="638.5" y2="432" stroke="#222" stroke-width="1" stroke-dasharray="1 1"/>
<line x1="675.5" y1="277" x2="675.5" y2="285" stroke="#222" stroke-width="1" stroke-dasharray="1 1"/>
<line x1="675.5" y1="290" x2="675.5" y2="310" stroke="#222" stroke-width="1" stroke-dasharray="1 1"/>
<line x1="675.5" y1="315" x2="675.5" y2="335" stroke="#222" stroke-width="1" stroke-dasharray="1 1"/>
<line x1="675.5" y1="340" x2="675.5" y2="393" stroke="#222" stroke-width="1" stroke-dasharray="1 1"/>
<line x1="675.5" y1="416" x2="675.5" y2="432" stroke="#222" stroke-width="1" stroke-dasharray="1 1"/>
<line x1="684.5" y1="277" x2="684.5" y2="285" stroke="#222" stroke-width="1" stroke-dasharray="1 1"/>
<line x1="684.5" y1="290" x2="684.5" y2="310" stroke="#222" stroke-width="1" stroke-dasharray="1 1"/>
<line x1="684.5" y1="315" x2="684.5" y2="335" stroke="#222" stroke-width="1" stroke-dasharray="1 1"/>
<line x1="684.5" y1="340" x2="684.5" y2="393" stroke="#222" stroke-width="1" stroke-dasharray="1 1"/>
<line x1="684.5" y1="416" x2="684.5" y2="432" stroke="#222" stroke-width="1" stroke-dasharray="1 1"/>
<line x1="723.5" y1="277" x2="723.5" y2="285" stroke="#222" stroke-width="1" stroke-dasharray="1 1"/>
<line x1="723.5" y1="290" x2="723.5" y2="310" stroke="#222" stroke-width="1" stroke-dasharray="1 1"/>
<line x1="723.5" y1="315" x2="723.5" y2="335" stroke="#222" stroke-width="1" stroke-dasharray="1 1"/>
<line x1="723.5" y1="340" x2="723.5" y2="393" stroke="#222" stroke-width="1" stroke-dasharray="1 1"/>
<line x1="723.5" y1="416" x2="723.5" y2="432" stroke="#222" stroke-width="1" stroke-dasharray="1 1"/>
<line x1="742.5" y1="277" x2="742.5" y2="285" stroke="#222" stroke-width="1" stroke-dasharray="1 1"/>
<line x1="742.5" y1="290" x2="742.5" y2="310" stroke="#222" stroke-width="1" stroke-dasharray="1 1"/>
<line x1="742.5" y1="315" x2="742.5" y2="335" stroke="#222" stroke-width="1" stroke-dasharray="1 1"/>
<line x1="742.5" y1="340" x2="742.5" y2="393" stroke="#222" stroke-width="1" stroke-dasharray="1 1"/>
<line x1="742.5" y1="416" x2="742.5" y2="432" stroke="#222" stroke-width="1" stroke-dasharray="1 1"/>
<line x1="750.5" y1="277" x2="750.5" y2="285" stroke="#222" stroke-width="1" stroke-dasharray="1 1"/>
<line x1="750.5" y1="290" x2="750.5" y2="310" stroke="#222" stroke-width="1" stroke-dasharray="1 1"/>
<line x1="750.5" y1="315" x2="750.5" y2="335" stroke="#222" stroke-width="1" stroke-dasharray="1 1"/>
<line x1="750.5" y1="340" x2="750.5" y2="393" stroke="#222" stroke-width="1" stroke-dasharray="1 1"/>
<line x1="750.5" y1="416" x2="750.5" y2="432" stroke="#222" stroke-width="1" stroke-dasharray="1 1"/>
<line x1="428" y1="338.5" x2="435" y2="338.5" stroke="#222" stroke-width="1" stroke-dasharray="1 1"/>
<line x1="441" y1="338.5" x2="460" y2="338.5" stroke="#222" stroke-width="1" stroke-dasharray="1 1"/>
<line x1="466" y1="338.5" x2="485" y2="338.5" stroke="#222" stroke-width="1" stroke-dasharray="1 1"/>
<line x1="491" y1="338.5" x2="510" y2="338.5" stroke="#222" stroke-width="1" stroke-dasharray="1 1"/>
<line x1="516" y1="338.5" x2="535" y2="338.5" stroke="#222" stroke-width="1" stroke-dasharray="1 1"/>
<line x1="541" y1="338.5" x2="560" y2="338.5" stroke="#222" stroke-width="1" stroke-dasharray="1 1"/>
<line x1="566" y1="338.5" x2="585" y2="338.5" stroke="#222" stroke-width="1" stroke-dasharray="1 1"/>
<line x1="591" y1="338.5" x2="610" y2="338.5" stroke="#222" stroke-width="1" stroke-dasharray="1 1"/>
<line x1="616" y1="338.5" x2="635" y2="338.5" stroke="#222" stroke-width="1" stroke-dasharray="1 1"/>
<line x1="641" y1="338.5" x2="660" y2="338.5" stroke="#222" stroke-width="1" stroke-dasharray="1 1"/>
<line x1="666" y1="338.5" x2="685" y2="338.5" stroke="#222" stroke-width="1" stroke-dasharray="1 1"/>
<line x1="691" y1="338.5" x2="710" y2="338.5" stroke="#222" stroke-width="1" stroke-dasharray="1 1"/>
<line x1="716" y1="338.5" x2="735" y2="338.5" stroke="#222" stroke-width="1" stroke-dasharray="1 1"/>
<line x1="741" y1="338.5" x2="760" y2="338.5" stroke="#222" stroke-width="1" stroke-dasharray="1 1"/>
<line x1="428" y1="348.5" x2="435" y2="348.5" stroke="#222" stroke-width="1" stroke-dasharray="1 1"/>
<line x1="441" y1="348.5" x2="460" y2="348.5" stroke="#222" stroke-width="1" stroke-dasharray="1 1"/>
<line x1="466" y1="348.5" x2="485" y2="348.5" stroke="#222" stroke-width="1" stroke-dasharray="1 1"/>
<line x1="491" y1="348.5" x2="510" y2="348.5" stroke="#222" stroke-width="1" stroke-dasharray="1 1"/>
<line x1="516" y1="348.5" x2="535" y2="348.5" stroke="#222" stroke-width="1" stroke-dasharray="1 1"/>
<line x1="541" y1="348.5" x2="560" y2="348.5" stroke="#222" stroke-width="1" stroke-dasharray="1 1"/>
<line x1="566" y1="348.5" x2="585" y2="348.5" stroke="#222" stroke-width="1" stroke-dasharray="1 1"/>
<line x1="591" y1="348.5" x2="610" y2="348.5" stroke="#222" stroke-width="1" stroke-dasharray="1 1"/>
<line x1="616" y1="348.5" x2="635" y2="348.5" stroke="#222" stroke-width="1" stroke-dasharray="1 1"/>
<line x1="641" y1="348.5" x2="660" y2="348.5" stroke="#222" stroke-width="1" stroke-dasharray="1 1"/>
<line x1="666" y1="348.5" x2="685" y2="348.5" stroke="#222" stroke-width="1" stroke-dasharray="1 1"/>
<line x1="691" y1="348.5" x2="710" y2="348.5" stroke="#222" stroke-width="1" stroke-dasharray="1 1"/>
<line x1="716" y1="348.5" x2="735" y2="348.5" stroke="#222" stroke-width="1" stroke-dasharray="1 1"/>
<line x1="741" y1="348.5" x2="760" y2="348.5" stroke="#222" stroke-width="1" stroke-dasharray="1 1"/>
<line x1="428" y1="368.5" x2="435" y2="368.5" stroke="#222" stroke-width="1" stroke-dasharray="1 1"/>
<line x1="441" y1="368.5" x2="460" y2="368.5" stroke="#222" stroke-width="1" stroke-dasharray="1 1"/>
<line x1="466" y1="368.5" x2="485" y2="368.5" stroke="#222" stroke-width="1" stroke-dasharray="1 1"/>
<line x1="491" y1="368.5" x2="510" y2="368.5" stroke="#222" stroke-width="1" stroke-dasharray="1 1"/>
<line x1="516" y1="368.5" x2="535" y2="368.5" stroke="#222" stroke-width="1" stroke-dasharray="1 1"/>
<line x1="541" y1="368.5" x2="560" y2="368.5" stroke="#222" stroke-width="1" stroke-dasharray="1 1"/>
<line x1="566" y1="368.5" x2="585" y2="368.5" stroke="#222" stroke-width="1" stroke-dasharray="1 1"/>
<line x1="591" y1="368.5" x2="610" y2="368.5" stroke="#222" stroke-width="1" stroke-dasharray="1 1"/>
<line x1="616" y1="368.5" x2="635" y2="368.5" stroke="#222" stroke-width="1" stroke-dasharray="1 1"/>
<line x1="641" y1="368.5" x2="660" y2="368.5" stroke="#222" stroke-width="1" stroke-dasharray="1 1"/>
<line x1="666" y1="368.5" x2="685" y2="368.5" stroke="#222" stroke-width="1" stroke-dasharray="1 1"/>
<line x1="691" y1="368.5" x2="710" y2="368.5" stroke="#222" stroke-width="1" stroke-dasharray="1 1"/>
<line x1="716" y1="368.5" x2="735" y2="368.5" stroke="#222" stroke-width="1" stroke-dasharray="1 1"/>
<line x1="741" y1="368.5" x2="760" y2="368.5" stroke="#222" stroke-width="1" stroke-dasharray="1 1"/>
<line x1="428" y1="378.5" x2="435" y2="378.5" stroke="#222" stroke-width="1" stroke-dasharray="1 1"/>
<line x1="441" y1="378.5" x2="460" y2="378.5" stroke="#222" stroke-width="1" stroke-dasharray="1 1"/>
<line x1="466" y1="378.5" x2="485" y2="378.5" stroke="#222" stroke-width="1" stroke-dasharray="1 1"/>
<line x1="491" y1="378.5" x2="510" y2="378.5" stroke="#222" stroke-width="1" stroke-dasharray="1 1"/>
<line x1="516" y1="378.5" x2="535" y2="378.5" stroke="#222" stroke-width="1" stroke-dasharray="1 1"/>
<line x1="541" y1="378.5" x2="560" y2="378.5" stroke="#222" stroke-width="1" stroke-dasharray="1 1"/>
<line x1="566" y1="378.5" x2="585" y2="378.5" stroke="#222" stroke-width="1" stroke-dasharray="1 1"/>
<line x1="591" y1="378.5" x2="610" y2="378.5" stroke="#222" stroke-width="1" stroke-dasharray="1 1"/>
<line x1="616" y1="378.5" x2="635" y2="378.5" stroke="#222" stroke-width="1" stroke-dasharray="1 1"/>
<line x1="641" y1="378.5" x2="660" y2="378.5" stroke="#222" stroke-width="1" stroke-dasharray="1 1"/>
<line x1="666" y1="378.5" x2="685" y2="378.5" stroke="#222" stroke-width="1" stroke-dasharray="1 1"/>
<line x1="691" y1="378.5" x2="710" y2="378.5" stroke="#222" stroke-width="1" stroke-dasharray="1 1"/>
<line x1="716" y1="378.5" x2="735" y2="378.5" stroke="#222" stroke-width="1" stroke-dasharray="1 1"/>
<line x1="741" y1="378.5" x2="760" y2="378.5" stroke="#222" stroke-width="1" stroke-dasharray="1 1"/>
<line x1="428" y1="388.5" x2="435" y2="388.5" stroke="#222" stroke-width="1" stroke-dasharray="1 1"/>
<line x1="441" y1="388.5" x2="460" y2="388.5" stroke="#222" stroke-width="1" stroke-dasharray="1 1"/>
<line x1="466" y1="388.5" x2="485" y2="388.5" stroke="#222" stroke-width="1" stroke-dasharray="1 1"/>
<line x1="491" y1="388.5" x2="510" y2="388.5" stroke="#222" stroke-width="1" stroke-dasharray="1 1"/>
<line x1="516" y1="388.5" x2="535" y2="388.5" stroke="#222" stroke-width="1" stroke-dasharray="1 1"/>
<line x1="541" y1="388.5" x2="560" y2="388.5" stroke="#222" stroke-width="1" stroke-dasharray="1 1"/>
<line x1="566" y1="388.5" x2="585" y2="388.5" stroke="#222" stroke-width="1" stroke-dasharray="1 1"/>
<line x1="591" y1="388.5" x2="610" y2="388.5" stroke="#222" stroke-width="1" stroke-dasharray="1 1"/>
<line x1="616" y1="388.5" x2="635" y2="388.5" stroke="#222" stroke-width="1" stroke-dasharray="1 1"/>
<line x1="641" y1="388.5" x2="660" y2="388.5" stroke="#222" stroke-width="1" stroke-dasharray="1 1"/>
<line x1="666" y1="388.5" x2="685" y2="388.5" stroke="#222" stroke-width="1" stroke-dasharray="1 1"/>
<line x1="691" y1="388.5" x2="710" y2="388.5" stroke="#222" stroke-width="1" stroke-dasharray="1 1"/>
<line x1="716" y1="388.5" x2="735" y2="388.5" stroke="#222" stroke-width="1" stroke-dasharray="1 1"/>
<line x1="741" y1="388.5" x2="760" y2="388.5" stroke="#222" stroke-width="1" stroke-dasharray="1 1"/>
<line x1="515.5" y1="275" x2="515.5" y2="432" stroke="#2a302e" stroke-width="1.2"/>
<line x1="609.5" y1="275" x2="609.5" y2="432" stroke="#2a302e" stroke-width="1.2"/>
<line x1="703.5" y1="275" x2="703.5" y2="432" stroke="#2a302e" stroke-width="1.2"/>
<line x1="428.5" y1="275" x2="428.5" y2="432" stroke="#2a302e" stroke-width="1.2"/>
<line x1="428" y1="358.5" x2="763" y2="358.5" stroke="#2a302e" stroke-width="1.2"/>
<line x1="428" y1="432" x2="763" y2="432" stroke="#2a302e" stroke-width="1.3"/>
<line x1="628" y1="292.5" x2="664" y2="292.5" stroke="#2a302e" stroke-width="1"/>
</svg>
<div class="tx" style="left:643px;top:296px;font-size:4.5px;color:#2a4a90">Series 1</div>
<svg class="a" style="left:394px;top:272px" width="370" height="169"><polyline points="34.8,33.0 36.0,26.0 37.5,17.0 38.5,9.0 39.5,5.0 41.5,8.0 44.6,13.6 47.0,17.0 50.0,20.0 56.0,21.0 59.0,26.0 62.0,31.0 66.0,38.0 69.0,43.0 73.0,48.0 77.0,53.0 80.0,58.0 84.0,63.0 88.0,66.0 92.0,69.0 97.0,73.0 106.0,77.8 112.0,81.0 118.0,84.0 121.4,86.2 126.0,91.0 130.0,95.0 136.0,99.0 142.0,103.0 149.0,106.0 158.0,109.0 168.0,113.0 178.0,116.5 187.0,119.0 196.0,122.0 206.0,125.0 215.0,127.0 224.0,130.0 234.0,133.0 243.0,135.5 253.0,138.0 262.0,141.0 272.0,144.0 281.0,146.5 290.0,149.0 309.0,150.5 328.0,155.0 347.0,157.5 356.0,159.0 368.0,160.0" fill="none" stroke="#9c3424" stroke-width="1.1" stroke-dasharray="1.3 2"/></svg>
<div class="tx" style="left:408px;top:306.0px;font-size:5px;color:#000">4000.0</div>
<div class="tx" style="left:408px;top:356.0px;font-size:5px;color:#000">3000.0</div>
<div class="tx" style="left:408px;top:406.0px;font-size:5px;color:#000">2000.0</div>
<div class="tx" style="left:507.5px;top:435px;font-size:5px;color:#000">1000.0</div>
<div class="tx" style="left:601.5px;top:435px;font-size:5px;color:#000">2000.0</div>
<div class="tx" style="left:695.5px;top:435px;font-size:5px;color:#000">3000.0</div>
<div class="sbv" style="left:765px;top:272px;width:7px;height:168px"></div>
<div class="a" style="left:765px;top:273px;width:7px;height:6px;background:#f4f3f0;border:1px solid #b9b5ae"></div>
<div class="thumbb" style="left:765px;top:279px;width:7px;height:153px"></div>
<div class="a" style="left:765px;top:433px;width:7px;height:7px;background:#f4f3f0;border:1px solid #b9b5ae"></div>
<div class="sbv" style="left:393px;top:443px;width:371px;height:7px"></div>
<div class="a" style="left:393px;top:443px;width:7px;height:7px;background:#f4f3f0;border:1px solid #b9b5ae"></div>
<div class="thumbb" style="left:400px;top:443px;width:356px;height:7px"></div>
<div class="a" style="left:756px;top:443px;width:7px;height:7px;background:#f4f3f0;border:1px solid #b9b5ae"></div>
<!-- ===== image window ===== -->
<div class="a" style="left:19px;top:144px;width:221px;height:257px;background:#ece9e3;border:1px solid #cdc9c2;border-top-color:#f6f5f2;box-shadow:0 1px 0 #b8b4ad"></div>
<div class="a" style="left:20px;top:145px;width:219px;height:10px;background:linear-gradient(#f2f0ec,#e8e5e0)"></div>
<div class="a" style="left:24px;top:147px;width:4px;height:5px;background:#b07060;opacity:.6"></div>
<div class="tx" style="left:59px;top:147px;font-size:6.5px;letter-spacing:0.15px;color:#9a8c84">output11 - /home/john/pics/bigs.jpg - 25%</div>
<div class="a" style="left:209px;top:145px;width:8px;height:7px;background:#f6f5f2;border:1px solid #d0ccc5"></div>
<div class="a" style="left:211px;top:149px;width:4px;height:1px;background:#888"></div>
<div class="a" style="left:219px;top:145px;width:9px;height:7px;background:#f6f5f2;border:1px solid #d0ccc5"></div>
<div class="a" style="left:221px;top:147px;width:5px;height:3px;border:1px solid #888"></div>
<div class="a" style="left:229px;top:145px;width:9px;height:7px;background:#f6f5f2;border:1px solid #d0ccc5"></div>
<svg class="a" style="left:231px;top:146px" width="5" height="5"><path d="M0.5,0.5 L4.5,4.5 M4.5,0.5 L0.5,4.5" stroke="#888" stroke-width="0.9"/></svg>
<div class="tx" style="left:23px;top:157px;font-size:6px;color:#000">File</div>
<div class="tx" style="left:37px;top:157px;font-size:6px;color:#000">View</div>
<div class="tx" style="left:56px;top:157px;font-size:6px;color:#000">Help</div>
<div class="a" style="left:20px;top:165px;width:219px;height:15px;background:#f2f0ec"></div>
<div class="tx" style="left:21px;top:166px;font-size:5.5px;color:#000">bigs, 3264x2448 3x8-bit unsigned integer, 3 bands, sRGB, 1.33 GB, 100 ppmm</div>
<div class="tx" style="left:21px;top:173px;font-size:5.5px;color:#000">(2850, 2358)          12408  13756  17520</div>
<div class="tx" style="left:193px;top:173px;font-size:5.5px;color:#000">Magnification 1:4</div>
<div class="a" style="left:20px;top:179px;width:219px;height:1px;background:#a29e97"></div>
<div class="a" style="left:22px;top:182px;width:13px;height:11px;background:#e2dfd9"></div>
<div class="tx" style="left:26px;top:184px;font-size:6px;color:#333">&gt;</div>
<div class="a" style="left:37px;top:182px;width:20px;height:10px;background:#fff;border-right:1px solid #8a8680"></div>
<div class="tx" style="left:38px;top:184px;font-size:5.5px;color:#000">0.004</div>
<div class="a" style="left:59px;top:186px;width:74px;height:2px;background:#a9a59f"></div>
<div class="a" style="left:59px;top:186px;width:17px;height:2px;background:#3f7ac8"></div>
<div class="a" style="left:75px;top:183px;width:8px;height:7px;background:linear-gradient(#fff,#dedbd5);border:1px solid #c0bcb5;border-radius:1px"></div>
<div class="a" style="left:139px;top:182px;width:20px;height:10px;background:#fff;border-right:1px solid #8a8680"></div>
<div class="tx" style="left:141px;top:184px;font-size:5.5px;color:#000">0.0</div>
<div class="a" style="left:161px;top:186px;width:76px;height:2px;background:#a9a59f"></div>
<div class="a" style="left:161px;top:186px;width:34px;height:2px;background:#3f7ac8"></div>
<div class="a" style="left:194px;top:183px;width:8px;height:7px;background:linear-gradient(#fff,#dedbd5);border:1px solid #c0bcb5;border-radius:1px"></div>
<!-- photo -->
<svg class="a" style="left:23px;top:196px" width="206" height="194" viewBox="0 0 206 194">
<defs>
<linearGradient id="sky" x1="0" y1="0" x2="1" y2="0.3"><stop offset="0" stop-color="#7e89ae"/><stop offset="0.55" stop-color="#8089c0"/><stop offset="1" stop-color="#8189c8"/></linearGradient><radialGradient id="cy" cx="0.5" cy="0.5" r="0.5"><stop offset="0" stop-color="#68a8e0" stop-opacity="0.55"/><stop offset="1" stop-color="#68a8e0" stop-opacity="0"/></radialGradient><pattern id="spk2" width="4" height="4" patternUnits="userSpaceOnUse"><rect x="0" y="1" width="2" height="1" fill="#62a6e4"/><rect x="2" y="3" width="1" height="1" fill="#6a9ee0"/></pattern>
<linearGradient id="fld" x1="0" y1="0" x2="0" y2="1"><stop offset="0" stop-color="#6b6c66"/><stop offset="1" stop-color="#6a6b66"/></linearGradient>
<pattern id="spk" width="7" height="7" patternUnits="userSpaceOnUse"><rect x="1" y="2" width="1" height="1" fill="#6fa8d8"/><rect x="4" y="5" width="1" height="1" fill="#9aa0d0"/></pattern>
<pattern id="fspk" width="5" height="5" patternUnits="userSpaceOnUse"><rect x="1" y="1" width="1" height="1" fill="#2f6a6a"/><rect x="3" y="3" width="1" height="1" fill="#8a8a80"/></pattern>
<pattern id="tspk" width="4" height="4" patternUnits="userSpaceOnUse"><rect x="1" y="1" width="2" height="1" fill="#3a4438"/></pattern><pattern id="tspk2" width="6" height="5" patternUnits="userSpaceOnUse"><rect x="1" y="1" width="2" height="1" fill="#2f3a38"/><rect x="4" y="3" width="1" height="2" fill="#8a8650"/><rect x="3" y="0" width="1" height="1" fill="#3a7a80"/></pattern>
<linearGradient id="haze" x1="0" y1="0" x2="0" y2="1"><stop offset="0" stop-color="#8f97b2" stop-opacity="0"/><stop offset="1" stop-color="#8f97b2" stop-opacity="0.6"/></linearGradient>
</defs>
<rect width="206" height="194" fill="url(#sky)"/>
<rect x="0" y="0" width="206" height="120" fill="url(#spk)" opacity="0.5"/>
<ellipse cx="100" cy="18" rx="80" ry="30" fill="url(#spk2)" opacity="0.45"/>
<ellipse cx="110" cy="15" rx="70" ry="28" fill="url(#cy)"/>
<rect x="0" y="60" width="206" height="72" fill="url(#haze)"/>
<ellipse cx="186" cy="12" rx="19" ry="10" fill="#a9abaa"/>
<ellipse cx="200" cy="33" rx="8" ry="9" fill="#a7a9ab"/>
<ellipse cx="149" cy="47" rx="19" ry="7" fill="#a9abac"/>
<ellipse cx="188" cy="54" rx="16" ry="4" fill="#a6a8ac"/>
<ellipse cx="165" cy="77" rx="14" ry="4" fill="#a4a6aa"/>
<ellipse cx="193" cy="76" rx="10" ry="4" fill="#a4a6aa"/>
<ellipse cx="22" cy="79" rx="4" ry="2" fill="#a0a4ac"/>
<ellipse cx="77" cy="82" rx="6" ry="2.5" fill="#a0a4ac"/>
<ellipse cx="80" cy="88" rx="4" ry="2" fill="#a0a4ac"/>
<ellipse cx="91" cy="26" rx="4" ry="2" fill="#a0a4ac"/>
<ellipse cx="119" cy="58" rx="8" ry="3" fill="#a0a4ac"/>
<ellipse cx="128" cy="72" rx="5" ry="2" fill="#a0a4ac"/>
<rect x="0" y="136" width="206" height="58" fill="url(#fld)"/>
<rect x="0" y="136" width="206" height="58" fill="url(#fspk)" opacity="0.55"/>
<path d="M0,131 L206,131 L206,141 L110,141 L84,151 L0,151 Z" fill="#666a48"/>
<path d="M0,131 L206,131 L206,141 L110,141 L84,151 L0,151 Z" fill="url(#tspk)" opacity="0.3"/>
<path d="M0,128 L8,127 L20,128 L37,129 L37,133 L0,133 Z" fill="#566040"/>
<path d="M100,133 L103,129 L110,128 L114,125 L120,126 L124,128 L130,127 L132,122 L138,119 L144,121 L150,125 L156,127 L164,127 L169,121 L176,118 L186,117 L196,118 L202,121 L206,126 L206,134 L100,134 Z" fill="#3e4c3c"/>
<path d="M34,127 C33,122 37,119 41,117 C43,113 47,111 50,110 C50,106 54,103 58,102 C62,99 72,99 80,100 C86,101 90,104 92,108 C96,110 98,114 97,118 C101,120 104,122 106,125 L106,136 L34,136 Z" fill="#6c6b3b"/>
<path d="M34,127 C33,122 37,119 41,117 C43,113 47,111 50,110 C50,106 54,103 58,102 C62,99 72,99 80,100 C86,101 90,104 92,108 C96,110 98,114 97,118 C101,120 104,122 106,125 L106,136 L34,136 Z" fill="url(#tspk2)" opacity="0.3"/>
<ellipse cx="72" cy="124" rx="20" ry="5" fill="#34403a" opacity="0.55"/>
<ellipse cx="48" cy="127" rx="7" ry="3" fill="#3a4438" opacity="0.45"/>
<ellipse cx="80" cy="116" rx="9" ry="2" fill="#3a4438" opacity="0.35"/>
<ellipse cx="90" cy="121" rx="6" ry="3" fill="#3a4438" opacity="0.5"/>
<ellipse cx="70" cy="106" rx="7" ry="2" fill="#7a7a48" opacity="0.6"/>
<ellipse cx="66" cy="132" rx="14" ry="3.5" fill="#34403a" opacity="0.5"/>
<path d="M127,157 L108,194 L112,194 L130,157 Z" fill="#8a6252" opacity="0.6"/>
<path d="M146,158 L166,194 L170,194 L149,158 Z" fill="#8a6252" opacity="0.5"/>
<path d="M3,172 L26,168 L26,170 L3,174 Z" fill="#8a6252" opacity="0.6"/>
<path d="M52,159 L64,155 L64,157 L52,161 Z" fill="#8a6252" opacity="0.5"/>
<rect x="128" y="143" width="3" height="12" fill="#2e4a48"/>
</svg>
<div class="sbv" style="left:231px;top:196px;width:7px;height:194px"></div>
<div class="a" style="left:231px;top:196px;width:7px;height:6px;background:#f4f3f0;border:1px solid #b9b5ae"></div>
<div class="thumbb" style="left:231px;top:350px;width:7px;height:12px"></div>
<div class="a" style="left:231px;top:384px;width:7px;height:6px;background:#f4f3f0;border:1px solid #b9b5ae"></div>
<div class="sbv" style="left:23px;top:391px;width:206px;height:6px"></div>
<div class="a" style="left:23px;top:391px;width:6px;height:6px;background:#f4f3f0;border:1px solid #b9b5ae"></div>
<div class="thumbb" style="left:29px;top:391px;width:17px;height:6px"></div>
<div class="a" style="left:223px;top:391px;width:6px;height:6px;background:#f4f3f0;border:1px solid #b9b5ae"></div>
<!-- status bar -->
<div class="a" style="left:0;top:487px;width:36px;height:10px;border:1px solid #dcd8d1;border-top-color:#c4c0b9;border-left-color:#c4c0b9"></div>
<div class="tx" style="left:1px;top:489px;font-size:6px;color:#000">3.52 GB free</div>
<div class="tx" style="left:39px;top:489px;font-size:6px;color:#000">K4 = Hist_plot_item action K5</div>
<div class="a" style="left:0;top:497px;width:800px;height:1px;background:#f6f5f2"></div>
<div class="a" style="left:0;top:498px;width:800px;height:2px;background:#e6e3de"></div>
<div class="a" style="left:717px;top:498px;width:24px;height:1px;background:#3a3f3c"></div>
<div class="a" style="left:744px;top:498px;width:13px;height:1px;background:#3a3f3c"></div>
<div class="a" style="left:759px;top:498px;width:10px;height:1px;background:#3a3f3c"></div>
<div class="a" style="left:785px;top:498px;width:15px;height:1px;background:#3a3f3c"></div>
<!-- arrows -->
<div class="a" style="left:0px;top:481px;width:6px;height:6px;background:#f4f3f0;border:1px solid #b9b5ae"></div>
<div class="a" style="left:676px;top:479px;width:6px;height:7px;background:#f4f3f0;border:1px solid #b9b5ae"></div>
<div class="a" style="left:785px;top:479px;width:6px;height:7px;background:#f4f3f0;border:1px solid #b9b5ae"></div>
<svg class="a" style="left:0;top:0;pointer-events:none" width="800" height="500"><polyline points="133.5,37.8 135.0,36.2 136.5,37.8" fill="none" stroke="#555" stroke-width="0.8"/><polyline points="133.5,474.2 135.0,475.8 136.5,474.2" fill="none" stroke="#555" stroke-width="0.8"/><polyline points="127.2,482.5 128.8,484.0 127.2,485.5" fill="none" stroke="#555" stroke-width="0.8"/><polyline points="3.8,482.5 2.2,484.0 3.8,485.5" fill="none" stroke="#555" stroke-width="0.8"/><polyline points="374.5,54.8 376.0,53.2 377.5,54.8" fill="none" stroke="#555" stroke-width="0.8"/><polyline points="374.5,151.2 376.0,152.8 377.5,151.2" fill="none" stroke="#555" stroke-width="0.8"/><polyline points="233.0,199.8 234.5,198.2 236.0,199.8" fill="none" stroke="#555" stroke-width="0.8"/><polyline points="233.0,386.2 234.5,387.8 236.0,386.2" fill="none" stroke="#555" stroke-width="0.8"/><polyline points="26.8,392.5 25.2,394.0 26.8,395.5" fill="none" stroke="#555" stroke-width="0.8"/><polyline points="225.2,392.5 226.8,394.0 225.2,395.5" fill="none" stroke="#555" stroke-width="0.8"/><polyline points="767.0,276.8 768.5,275.2 770.0,276.8" fill="none" stroke="#555" stroke-width="0.8"/><polyline points="767.0,435.7 768.5,437.3 770.0,435.7" fill="none" stroke="#555" stroke-width="0.8"/><polyline points="397.3,445.0 395.7,446.5 397.3,448.0" fill="none" stroke="#555" stroke-width="0.8"/><polyline points="758.7,445.0 760.3,446.5 758.7,448.0" fill="none" stroke="#555" stroke-width="0.8"/><polyline points="795.0,39.8 796.5,38.2 798.0,39.8" fill="none" stroke="#555" stroke-width="0.8"/><polyline points="795.0,473.2 796.5,474.8 798.0,473.2" fill="none" stroke="#555" stroke-width="0.8"/><polyline points="679.8,481.0 678.2,482.5 679.8,484.0" fill="none" stroke="#555" stroke-width="0.8"/><polyline points="787.2,481.0 788.8,482.5 787.2,484.0" fill="none" stroke="#555" stroke-width="0.8"/></svg>
<div class="a" style="left:35px;top:483px;width:2px;height:2px;background:#1a3a80"></div>
<div class="a" style="left:375px;top:108px;width:2px;height:2px;background:#1a3a80"></div>
<div class="a" style="left:796px;top:61px;width:2px;height:2px;background:#1a3a80"></div>
<div class="a" style="left:578px;top:445px;width:2px;height:2px;background:#1a3a80"></div>
<div class="a" style="left:768px;top:355px;width:2px;height:2px;background:#1a3a80"></div>
<div class="a" style="left:234px;top:355px;width:2px;height:2px;background:#1a3a80"></div>
<div class="a" style="left:134px;top:91px;width:2px;height:2px;background:#1a3a80"></div>
<div class="a" style="left:691px;top:481px;width:2px;height:2px;background:#1a3a80"></div>
</body></html>
